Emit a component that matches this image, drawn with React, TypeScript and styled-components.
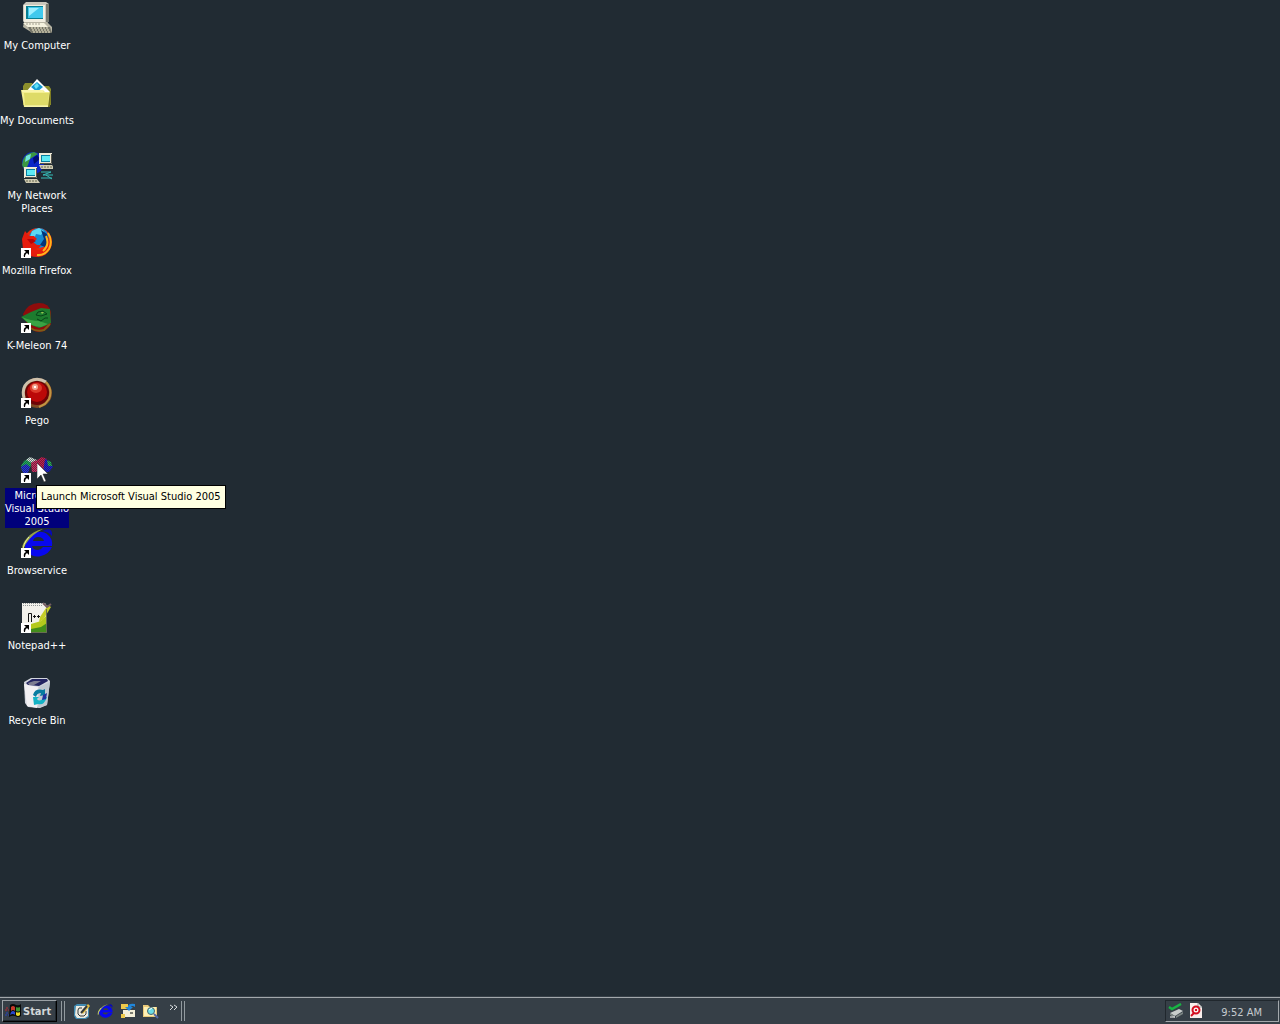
import React from "react";
import styled, { createGlobalStyle, css } from "styled-components";

const GlobalStyle = createGlobalStyle`
  * { box-sizing: border-box; }
  body {
    margin: 0;
    background: #212b33;
    color: #fff;
    font: 11px/13px "DejaVu Sans Condensed", "DejaVu Sans", sans-serif;
    font-stretch: condensed;
  }
  button { font: inherit; color: inherit; background: none; border: 0; padding: 0; }
  svg { display: block; flex: none; }
`;

const Screen = styled.div`
  min-height: 100vh;
  display: flex;
  flex-direction: column;
  overflow: hidden;
`;

const Desktop = styled.main`
  flex: 1;
  padding-top: 2px;
`;

const IconColumn = styled.ul`
  list-style: none;
  margin: 0;
  padding: 0;
  width: 74px;
`;

const IconCell = styled.li`
  position: relative;
  height: 75px;
  display: flex;
  justify-content: center;
  align-items: flex-start;
`;

const Shortcut = styled.button`
  width: 74px;
  display: flex;
  flex-direction: column;
  align-items: center;
  gap: 4px;
`;

const Label = styled.span<{ $selected?: boolean }>`
  padding-top: 1px;
  white-space: pre;
  text-align: center;
  ${(p) => p.$selected && css`background: #00007b;`}
`;

const Tip = styled.div`
  position: absolute;
  z-index: 2;
  left: 36px;
  top: 33px;
  padding: 4px 4px 5px 4px;
  border: 1px solid #000;
  background: #ffffe1;
  color: #000;
  white-space: nowrap;
`;

const Cursor = styled.svg`
  position: absolute;
  z-index: 3;
  left: 37px;
  top: 11px;
`;

const Taskbar = styled.footer`
  height: 28px;
  display: flex;
  align-items: center;
  gap: 4px;
  padding: 1px 1px 0 2px;
  background: #363f47;
  border-top: 1px solid #363f47;
  box-shadow: inset 0 1px #a3a8ac;
`;

const StartButton = styled.button`
  height: 22px;
  width: 55px;
  display: flex;
  align-items: center;
  gap: 1px;
  padding-left: 2px;
  border: 1px solid;
  border-color: #9ba1a6 #000 #000 #9ba1a6;
  box-shadow: inset -1px -1px #20272d;
  color: #d2d6d9;
  font-weight: bold;
`;

const Grip = styled.span`
  width: 4px;
  height: 20px;
  border-left: 1px solid #929a9f;
  border-right: 1px solid #929a9f;
`;

const QuickLaunch = styled.nav`
  flex: 1;
  display: flex;
  align-items: center;
  gap: 7px;
  padding-left: 5px;
`;

const More = styled.button`
  display: flex;
  align-self: flex-start;
  margin: 3px -4px 0 3px;
`;

const Tray = styled.div`
  height: 22px;
  display: flex;
  align-items: center;
  gap: 4px;
  padding: 0 16px 0 2px;
  border: 1px solid;
  border-color: #20272d #a3a8ac #a3a8ac #20272d;
  color: #c5cace;
`;

const Clock = styled.time`
  padding: 2px 0 0 13px;
`;

const Svg32 = ({ children }: { children: React.ReactNode }) => (
  <svg width="32" height="32" viewBox="0 0 32 32" aria-hidden="true">{children}</svg>
);
const Svg16 = ({ children }: { children: React.ReactNode }) => (
  <svg width="16" height="16" viewBox="0 0 16 16" aria-hidden="true">{children}</svg>
);

const Arrow = () => (
  <g>
    <path d="M0 21H10V31H0Z" fill="#fff" />
    <path d="M3 23H8V28L6 26Q4 27 4 30H3Q2 26 5 25Z" fill="#000" />
  </g>
);

const Computer = () => (
  <Svg32>
    <path d="M2 3 5 0H25L28 2V19L25 22H4L2 19Z" fill="#c9c7bd" />
    <path d="M3 3H24V20H3Z" fill="#f2eee0" />
    <path d="M25 2H28V19L25 22Z" fill="#77786f" />
    <path d="M5 4H22V17H5Z" fill="#087e91" />
    <path d="M7 5H22V16H7Z" fill="#40c9ed" />
    <path d="M8 6H18L8 14Z" fill="#9defff" />
    <path d="M3 20H26L31 25V30H10L2 25Z" fill="#b8b5a4" />
    <path d="M2 21H23L28 26H8Z" fill="#f5f2df" />
    <path d="M7 25H29L31 31H10Z" fill="#77776b" />
    <path d="M10 26H27M11 28H29M12 30H30" stroke="#eee7c8" strokeDasharray="2 1" />
    <path d="M5 22H20" stroke="#a29f91" strokeDasharray="2 1" />
  </Svg32>
);

const Documents = () => (
  <Svg32>
    <path d="M2 9 4 6H11L13 9H28L30 12V28H2Z" fill="#8c8f2c" />
    <path d="M16 2 29 15H5Z" fill="#fff" />
    <path d="M16 5 22 10 16 15 10 10Z" fill="#159ad0" />
    <path d="M13 9 16 6 18 9 15 12Z" fill="#64e1f6" />
    <path d="M0 13H22L24 15H29L28 30H3Z" fill="#f4ef90" />
    <path d="M3 16H28L27 29H4Z" fill="#dedb68" />
    <path d="M1 14H22M4 29H27" stroke="#fffbc1" />
    <path d="M29 14H30L29 30H27Z" fill="#79751d" />
  </Svg32>
);

const SmallPc = () => (
  <g>
    <path d="M0 0H13V11H0Z" fill="#eeead9" />
    <path d="M2 2H11V9H2Z" fill="#087fa0" />
    <path d="M3 3H11V8H3Z" fill="#5deaf5" />
    <path d="M12.5 1V10.5H1" fill="none" stroke="#55564c" />
    <path d="M0 12H13L16 16H2Z" fill="#d0cbb1" />
    <path d="M2 14H13" stroke="#656650" strokeDasharray="2 1" />
  </g>
);

const Network = () => (
  <Svg32>
    <circle cx="12" cy="11" r="11" fill="#0a24c7" />
    <path d="M2 8Q5 1 13 0L17 2L12 5L9 7L7 13L4 19L1 13Z" fill="#3c9742" />
    <path d="M5 4 10 2 9 7 4 10Z" fill="#72e3df" />
    <path d="M12 6 16 3 19 7 13 12Z" fill="#000d75" />
    <g transform="translate(18 1)"><SmallPc /></g>
    <g transform="translate(3 15)"><SmallPc /></g>
    <path d="M20 20H30L22 23H32M20 26H31M25 23 31 27" stroke="#36bdb8" fill="none" />
  </Svg32>
);

const Firefox = () => (
  <Svg32>
    <circle cx="17" cy="15" r="14" fill="#ed2a0c" />
    <circle cx="18" cy="11" r="10" fill="#148bd2" />
    <path d="M11 4 18 1 23 4 20 8 15 7 13 12 9 10Z" fill="#5ed8f2" />
    <path d="M20 3 26 7 28 14 24 20 19 18 23 12Z" fill="#043579" />
    <path d="M26 6Q32 12 30 19Q27 30 16 30Q5 30 2 22L1 12L4 4L8 9L13 9L16 12L12 15L16 18H20L18 21L14 22Q22 25 26 18Q29 11 26 6Z" fill="#e51c0d" />
    <path d="M27 6Q32 14 28 22Q23 29 16 28M25 9Q29 18 22 24" fill="none" stroke="#ffb51b" strokeWidth="2" />
    <path d="M6 12 12 12 15 14 10 17Z" fill="#b80508" />
    <Arrow />
  </Svg32>
);

const Kmeleon = () => (
  <Svg32>
    <path d="M2 12Q7 1 18 1Q28 1 30 10V22Q26 30 17 30Q7 29 2 12Z" fill="#8e0c0c" />
    <path d="M0 15 10 10 20 6 29 7 30 21 24 24 18 26 8 22Z" fill="#1d7c2e" />
    <path d="M1 15Q10 19 18 19L27 22L20 25Q9 24 4 18Z" fill="#3aa344" />
    <path d="M17 10 22 9 26 12 20 14 15 13ZM16 17 20 19 24 16 27 16" fill="none" stroke="#064318" />
    <path d="M20 10 23 10 21 12Z" fill="#99c14f" />
    <path d="M9 26Q16 30 23 28L29 22" fill="none" stroke="#805a17" strokeWidth="2" />
    <Arrow />
  </Svg32>
);

const Pego = () => (
  <Svg32>
    <circle cx="16" cy="16" r="15" fill="#7f4a23" />
    <circle cx="16" cy="16" r="12" fill="#6c0406" />
    <circle cx="16" cy="15" r="10" fill="#bb0908" />
    <ellipse cx="15" cy="11" rx="6" ry="5" fill="#dc3c2b" />
    <ellipse cx="14" cy="10" rx="3" ry="3" fill="#f3a590" />
    <path d="M13 9H15V11H13Z" fill="#fff" />
    <path d="M3 21Q0 9 9 4Q17 0 25 5" fill="none" stroke="#cfc1ac" strokeWidth="3" />
    <path d="M25 5Q32 13 28 22L24 27L18 30" fill="none" stroke="#c29443" strokeWidth="2" />
    <Arrow />
  </Svg32>
);

const VisualStudio = () => (
  <Svg32>
    <defs>
      <pattern id="vsMesh" width="2" height="2" patternUnits="userSpaceOnUse">
        <path d="M0 0H1V1H0ZM1 1H2V2H1Z" fill="#212b33" />
      </pattern>
    </defs>
    <path d="M0 14 3 9 8 6 14 8 10 14 5 20 1 19Z" fill="#19b65a" />
    <path d="M5 8 9 5 16 8 13 12Z" fill="#d8e3de" />
    <path d="M0 15 5 12 9 15 7 21H2Z" fill="#2430e5" />
    <path d="M10 11 15 8 19 13 16 20 11 20Z" fill="#d3265a" />
    <path d="M16 8 21 5 26 7 25 18 19 20 16 15Z" fill="#d0184c" />
    <path d="M24 7 28 9 32 15 28 20 22 20Z" fill="#1818d9" />
    <path d="M26 8 30 10 31 14 27 14Z" fill="#28b453" />
    <path d="M0 4H32V21H0Z" fill="url(#vsMesh)" opacity=".6" />
    <Arrow />
  </Svg32>
);

const IeShape = () => (
  <g>
    <path d="M31 20H22Q20 23 17 23Q12 23 11 19H31Q32 12 27 8Q23 4 17 5Q9 6 5 13Q2 20 7 25Q12 31 20 29Q28 27 31 20ZM12 14Q13 10 17 10Q22 10 23 14Z" fill="#0808ee" fillRule="evenodd" />
    <path d="M21 4Q32 -1 31 9Q28 5 21 4Z" fill="#0808b8" />
    <path d="M2 25Q-1 19 6 11Q12 4 22 2Q12 7 7 14Q2 20 2 25Z" fill="#929f46" />
    <path d="M3 23Q1 18 8 10" fill="none" stroke="#eff69e" />
  </g>
);

const Browservice = () => <Svg32><IeShape /><Arrow /></Svg32>;

const Notepad = () => (
  <Svg32>
    <path d="M1 1H24L26 4V31H1Z" fill="#f2f1eb" />
    <path d="M2 1.500H24M2 3.500H22" stroke="#8f9596" strokeDasharray="1 1" />
    <path d="M10 22 20 19 26 13V31H10Z" fill="#b4c91d" />
    <path d="M10 27 20 25 26 21V31H10Z" fill="#438d1c" />
    <path d="M27 3 30 5 22 18 18 20 19 15Z" fill="#c4cd27" />
    <path d="M22 1 26 5 30 2" fill="none" stroke="#735c62" strokeWidth="2" />
    <path d="M7.500 20V11.500H10.500V20M12 14.500H15M13.500 13V16M16 14.500H19M17.500 13V16" stroke="#151515" fill="none" />
    <path d="M25.500 7V30.500H1" fill="none" stroke="#696d52" />
    <Arrow />
  </Svg32>
);

const RecycleBin = () => (
  <Svg32>
    <path d="M3 5 10 1 26 1 29 4 26 28 19 31 7 30 4 26Z" fill="#d2d5dd" />
    <path d="M3 7 17 10 16 31 6 29Z" fill="#f2f0f3" />
    <path d="M18 10 29 5 26 28 17 31Z" fill="#c1c9d1" />
    <path d="M5 6 11 2 26 2 27 4 18 9 7 8Z" fill="#232461" />
    <path d="M7 6 13 4 20 4 13 8 8 8Z" fill="#7d7d92" />
    <path d="M12 18Q14 11 22 13L24 12V18L19 19L20 16Q16 16 15 20Z" fill="#087ca1" />
    <path d="M12 20H18L16 22Q19 26 23 20H26Q23 29 17 27L13 28Z" fill="#14b2c5" />
    <path d="M22 18 26 16 25 22 21 23Z" fill="#2333a0" />
  </Svg32>
);

const shortcuts = [
  { name: "My Computer", icon: <Computer /> },
  { name: "My Documents", icon: <Documents /> },
  { name: "My Network\nPlaces", icon: <Network /> },
  { name: "Mozilla Firefox", icon: <Firefox /> },
  { name: "K-Meleon 74", icon: <Kmeleon /> },
  { name: "Pego", icon: <Pego /> },
  { name: "Microsoft\nVisual Studio\n2005", icon: <VisualStudio />, tip: "Launch Microsoft Visual Studio 2005" },
  { name: "Browservice", icon: <Browservice /> },
  { name: "Notepad++", icon: <Notepad /> },
  { name: "Recycle Bin", icon: <RecycleBin /> },
];

const Flag = () => (
  <svg width="17" height="16" viewBox="0 0 17 16" aria-hidden="true">
    <path d="M5 2Q8 0 11 2Q14 3 16 1V13Q13 15 10 13Q7 12 4 14Z" fill="#090909" />
    <path d="M6 4Q8 2 10 4V8Q8 6 6 8Z" fill="#c43a2a" />
    <path d="M11 4Q13 5 15 4V8Q13 9 11 8Z" fill="#3c9530" />
    <path d="M6 9Q8 7 10 9V12Q8 10 5 12Z" fill="#2747ca" />
    <path d="M11 9Q13 10 15 9V12Q13 14 11 12Z" fill="#e9d925" />
    <path d="M1 5H4M0 7H4" stroke="#bf2731" strokeDasharray="2 1" />
    <path d="M1 10H4M0 12H4" stroke="#2445c2" strokeDasharray="2 1" />
  </svg>
);

const ShowDesktop = () => (
  <Svg16>
    <path d="M0 3 3 1H12L15 4V14L12 16H2L0 13Z" fill="#4089b0" />
    <path d="M2 3H12L14 5V13L11 15H3L1 12Z" fill="#eceae0" />
    <path d="M8 5H5L4 7V11L6 13H10L12 11V8" stroke="#33393b" fill="none" />
    <path d="M7 9 14 1 16 3 9 11Z" fill="#e3bd43" />
    <path d="M7 10 13 3" stroke="#33393b" strokeWidth="2" />
  </Svg16>
);
const Explorer = () => (
  <svg width="16" height="16" viewBox="0 0 32 32" aria-hidden="true"><IeShape /></svg>
);
const Mail = () => (
  <Svg16>
    <path d="M1 1H8V6H1Z" fill="#edc94b" />
    <path d="M3 7H15V14H3Z" fill="#f4efd8" />
    <path d="M1 11H5V15H1Z" fill="#edc94b" />
    <path d="M10 9H13V11H10Z" fill="#7c7d72" />
    <path d="M15 1Q8 0 8 4H5L9 8L13 4H11Q12 2 15 4Z" fill="#2087dc" />
  </Svg16>
);
const Search = () => (
  <Svg16>
    <path d="M0 2H5L7 4H14V14H0Z" fill="#e9c979" />
    <path d="M1 4H13V13H1Z" fill="#fff0b4" />
    <circle cx="8" cy="8" r="3.5" fill="#6cdde7" stroke="#47666c" />
    <path d="M6 7 9 5" stroke="#fff" />
    <path d="M11 11 15 15" stroke="#5269a5" strokeWidth="2" />
  </Svg16>
);
const SafeRemove = () => (
  <Svg16>
    <path d="M2 10 11 6 15 8 7 13Z" fill="#c8cdcc" />
    <path d="M2 10 7 13V15L2 12ZM8 13 15 9V11L8 15Z" fill="#7c8584" />
    <path d="M1 4 4 6 13 1" fill="none" stroke="#18b443" strokeWidth="2.5" />
    <path d="M2 14H7" stroke="#fff" />
  </Svg16>
);
const TrayDocument = () => (
  <Svg16>
    <path d="M2 0H10L14 4V15H2Z" fill="#f9efec" />
    <path d="M10 0V4H14" fill="none" stroke="#91999a" />
    <circle cx="8" cy="7" r="3.5" fill="none" stroke="#d50d20" strokeWidth="2" />
    <path d="M7 6H9V8H7Z" fill="#d50d20" />
    <path d="M6 10 3 13" stroke="#d50d20" strokeWidth="2" />
  </Svg16>
);

const quickLinks = [
  { name: "Show Desktop", icon: <ShowDesktop /> },
  { name: "Internet Explorer", icon: <Explorer /> },
  { name: "Outlook Express", icon: <Mail /> },
  { name: "Search", icon: <Search /> },
];

export default function App() {
  return (
    <Screen>
      <GlobalStyle />
      <Desktop>
        <IconColumn>
          {shortcuts.map(({ name, icon, tip }) => (
            <IconCell key={name}>
              <Shortcut aria-describedby={tip && "shortcut-tip"}>
                {icon}
                <Label $selected={!!tip}>{name}</Label>
              </Shortcut>
              {tip && (
                <>
                  <Tip id="shortcut-tip" role="tooltip">{tip}</Tip>
                  <Cursor width="12" height="20" viewBox="0 0 12 20" aria-hidden="true">
                    <path d="M0 0V16L4 12L7 19L9 18L6 11H11Z" fill="#fff" stroke="#222" strokeWidth=".5" />
                  </Cursor>
                </>
              )}
            </IconCell>
          ))}
        </IconColumn>
      </Desktop>
      <Taskbar>
        <StartButton><Flag />Start</StartButton>
        <Grip />
        <QuickLaunch aria-label="Quick Launch">
          {quickLinks.map(({ name, icon }) => (
            <button key={name} aria-label={name}>{icon}</button>
          ))}
          <More aria-label="More">
            <svg width="9" height="8" viewBox="0 0 9 8" aria-hidden="true">
              <path d="M1 1 4 3 1 6M5 1 8 3 5 6" fill="none" stroke="#d7dbde" />
            </svg>
          </More>
          <Grip />
        </QuickLaunch>
        <Tray>
          <SafeRemove />
          <TrayDocument />
          <Clock>9:52 AM</Clock>
        </Tray>
      </Taskbar>
    </Screen>
  );
}
